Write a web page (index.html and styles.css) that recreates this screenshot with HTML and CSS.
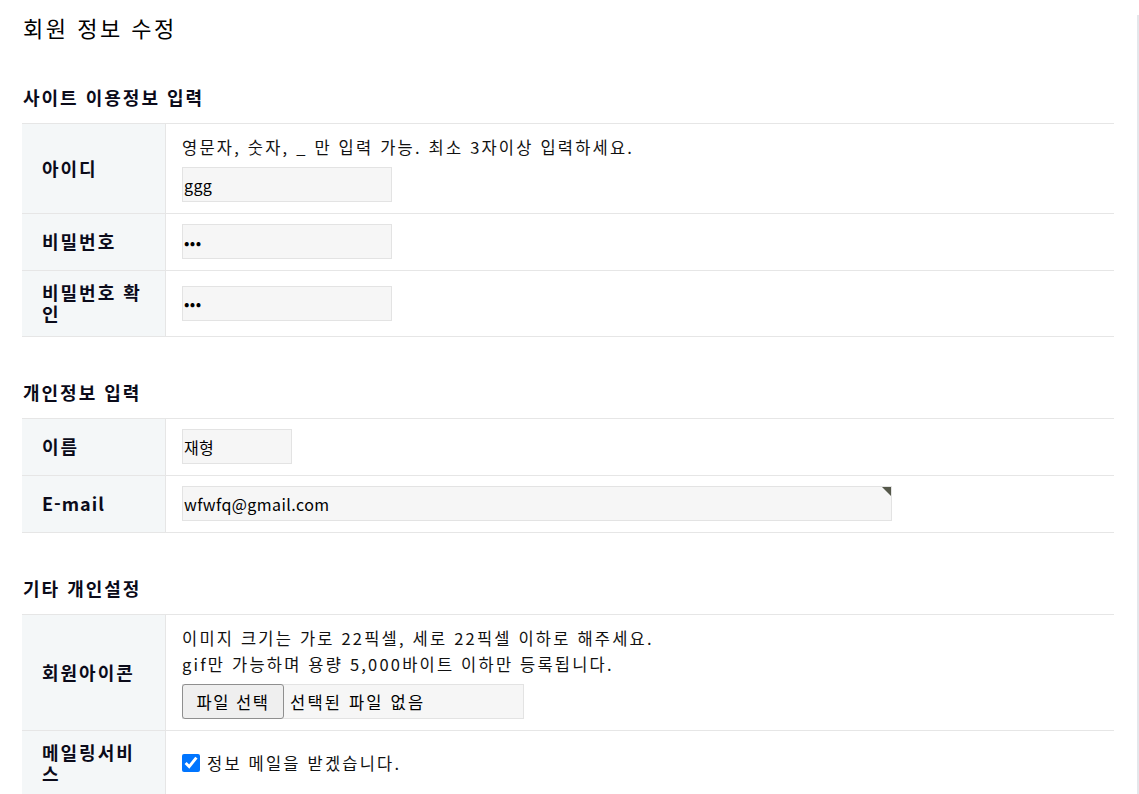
FILE: index.html
```html
<!DOCTYPE html>
<html lang="ko">
<head>
<meta charset="utf-8">
<title>회원 정보 수정</title>
<link rel="stylesheet" href="styles.css">
</head>
<body>
<div class="page">
  <h1 class="title">회원 정보 수정</h1>

  <section class="sec">
    <h2 class="sec-title">사이트 이용정보 입력</h2>
    <table class="form-table">
      <tr>
        <th>아이디</th>
        <td>
          <p class="help">영문자, 숫자, _ 만 입력 가능. 최소 3자이상 입력하세요.</p>
          <input class="frm w-md" type="text" value="ggg">
        </td>
      </tr>
      <tr>
        <th>비밀번호</th>
        <td><input class="frm w-md" type="password" value="ggg"></td>
      </tr>
      <tr>
        <th>비밀번호 확인</th>
        <td><input class="frm w-md" type="password" value="ggg"></td>
      </tr>
    </table>
  </section>

  <section class="sec">
    <h2 class="sec-title">개인정보 입력</h2>
    <table class="form-table">
      <tr>
        <th>이름</th>
        <td><input class="frm w-sm" type="text" value="재형"></td>
      </tr>
      <tr>
        <th class="latin">E-mail</th>
        <td><span class="mark-wrap"><input class="frm w-lg" type="text" value="wfwfq@gmail.com"></span></td>
      </tr>
    </table>
  </section>

  <section class="sec">
    <h2 class="sec-title">기타 개인설정</h2>
    <table class="form-table">
      <tr>
        <th>회원아이콘</th>
        <td>
          <p class="help">이미지 크기는 가로 22픽셀, 세로 22픽셀 이하로 해주세요.<br>gif만 가능하며 용량 5,000바이트 이하만 등록됩니다.</p>
          <label class="file">
            <input class="file-input" type="file">
            <span class="file-btn">파일 선택</span>
            <span class="file-name">선택된 파일 없음</span>
          </label>
        </td>
      </tr>
      <tr>
        <th>메일링서비스</th>
        <td>
          <label class="chk"><input type="checkbox" checked><span>정보 메일을 받겠습니다.</span></label>
        </td>
      </tr>
    </table>
  </section>
</div>
</body>
</html>
```

FILE: styles.css
```css
html, body {
  margin: 0;
  padding: 0;
  background: #fff;
}
body {
  font-family: "Noto Sans CJK KR", "Noto Sans", "Liberation Sans", sans-serif;
  color: #111;
  overflow: hidden;
}
.page {
  min-height: 100vh;
  padding: 0 23px 0 22px;
  border-right: 2px solid #e4e7eb;
}
.title {
  margin: 15px 0 0 1px;
  padding-bottom: 3px;
  font-size: 22px;
  line-height: 24px;
  font-weight: 400;
  letter-spacing: 2.5px;
  color: #000;
}
.sec {
  margin-top: 42px;
}
.sec-title {
  margin: 0 0 13px 1px;
  font-size: 18px;
  line-height: 26px;
  font-weight: 700;
  letter-spacing: 2px;
  color: #0b0b1a;
}
.form-table {
  width: 100%;
  border-collapse: collapse;
  border-top: 1px solid #e6e6e6;
}
.form-table tr {
  border-bottom: 1px solid #e6e6e6;
}
.form-table th {
  width: 103px;
  padding: 11px 20px 12px;
  background: #f4f7f8;
  border-right: 1px solid #e6e6e6;
  text-align: left;
  vertical-align: middle;
  font-size: 18px;
  line-height: 21px;
  font-weight: 700;
  letter-spacing: 2px;
  color: #0b0b1a;
}
.form-table th.latin {
  letter-spacing: 1px;
}
.form-table td {
  padding: 10px 15px 11px 16px;
  vertical-align: middle;
  font-size: 16.5px;
  letter-spacing: 2.2px;
  color: #111;
}
.help {
  margin: 0;
  line-height: 26px;
}
.frm {
  display: block;
  box-sizing: border-box;
  height: 35px;
  margin: 0;
  padding: 0 1px;
  border: 1px solid #e3e3e3;
  background: #f6f6f6;
  font-family: inherit;
  font-size: 16px;
  letter-spacing: 0.4px;
  color: #000;
  outline: none;
}
.help + .frm,
.help + .file {
  margin-top: 7px;
}
.w-md { width: 210px; }
.w-sm { width: 110px; }
.w-lg { width: 710px; }
.file {
  display: flex;
  align-items: stretch;
  box-sizing: border-box;
  width: 342px;
  height: 35px;
  border: 1px solid #e3e3e3;
  background: #f6f6f6;
  cursor: pointer;
}
.file-input {
  display: none;
}
.file-btn {
  display: flex;
  align-items: center;
  justify-content: center;
  box-sizing: border-box;
  width: 102px;
  margin: -1px 0 -1px -1px;
  border: 1px solid #8f8f8f;
  border-radius: 3px;
  background: #efefef;
  font-size: 16.5px;
  letter-spacing: 1.5px;
  color: #000;
}
.file-name {
  display: flex;
  align-items: center;
  padding-left: 6px;
  color: #000;
}
.mark-wrap {
  position: relative;
  display: inline-block;
  vertical-align: top;
}
.mark-wrap::after {
  content: "";
  position: absolute;
  top: 1px;
  right: 1px;
  width: 0;
  height: 0;
  border-top: 9px solid #55584a;
  border-left: 9px solid transparent;
}
.chk {
  display: flex;
  align-items: center;
  gap: 7px;
  line-height: 26px;
}
.chk input {
  width: 18px;
  height: 18px;
  margin: 0;
}
```
